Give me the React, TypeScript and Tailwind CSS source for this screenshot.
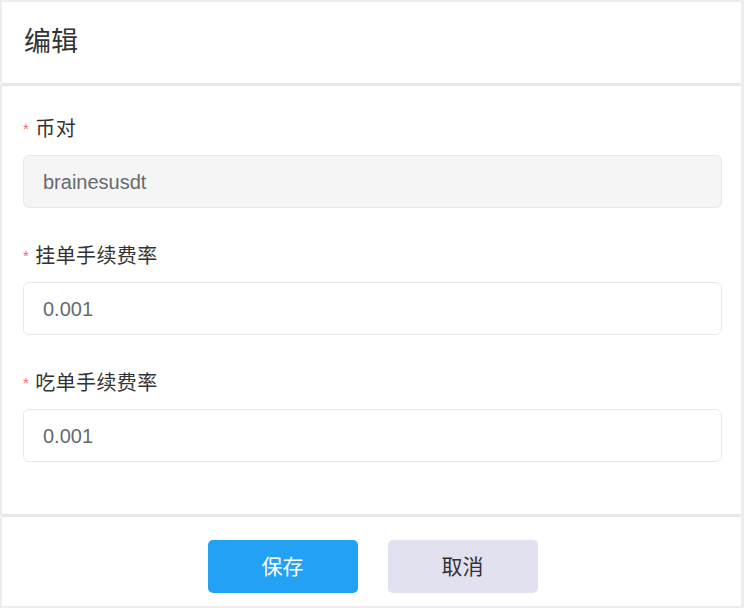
import React from "react";

const fields = [
  { label: "币对", value: "brainesusdt", disabled: true },
  { label: "挂单手续费率", value: "0.001", disabled: false },
  { label: "吃单手续费率", value: "0.001", disabled: false },
];

export default function App() {
  return (
    <main className="h-[608px] w-[744px] bg-white font-['Liberation_Sans','Noto_Sans_CJK_SC',sans-serif]">
      <section className="flex h-full flex-col border-b-2 border-l-2 border-r-[3px] border-t-2 border-[#ededed]">
        {/* header */}
        <header className="flex h-[84px] shrink-0 items-center border-b-[3px] border-[#e6e8eb] pl-[22px]">
          <h1 className="text-[27px] text-[#333]">编辑</h1>
        </header>

        {/* form */}
        <div className="flex flex-1 flex-col pl-[21px] pr-[19px] pt-[31px]">
          {fields.map((f) => (
            <div key={f.label} className="mb-[36px] last:mb-0">
              <label className="flex h-[24px] items-center text-[20px] tracking-[0.4px] text-[#333]">
                <span className="mr-[6px] text-[15px] text-[#f56c6c]">*</span>
                {f.label}
              </label>
              <div
                className={
                  f.disabled
                    ? "mt-[14px] flex h-[53px] items-center rounded-[6px] border border-[#e8e8e8] bg-[#f5f5f5] px-[19px] text-[20px] text-[#666a70]"
                    : "mt-[14px] flex h-[53px] items-center rounded-[6px] border border-[#e8e8e8] bg-white px-[19px] text-[20px] text-[#666a70]"
                }
              >
                {f.value}
              </div>
            </div>
          ))}
        </div>

        {/* footer */}
        <footer className="flex h-[92px] shrink-0 justify-center gap-[30px] border-t-[3px] border-[#e6e8eb] pl-[2px] pt-[23px]">
          <button className="h-[53px] w-[150px] rounded-[5px] bg-[#22a1f5] text-[21px] text-white">
            保存
          </button>
          <button className="h-[53px] w-[150px] rounded-[5px] bg-[#e2e1ef] text-[21px] text-[#333]">
            取消
          </button>
        </footer>
      </section>
    </main>
  );
}
